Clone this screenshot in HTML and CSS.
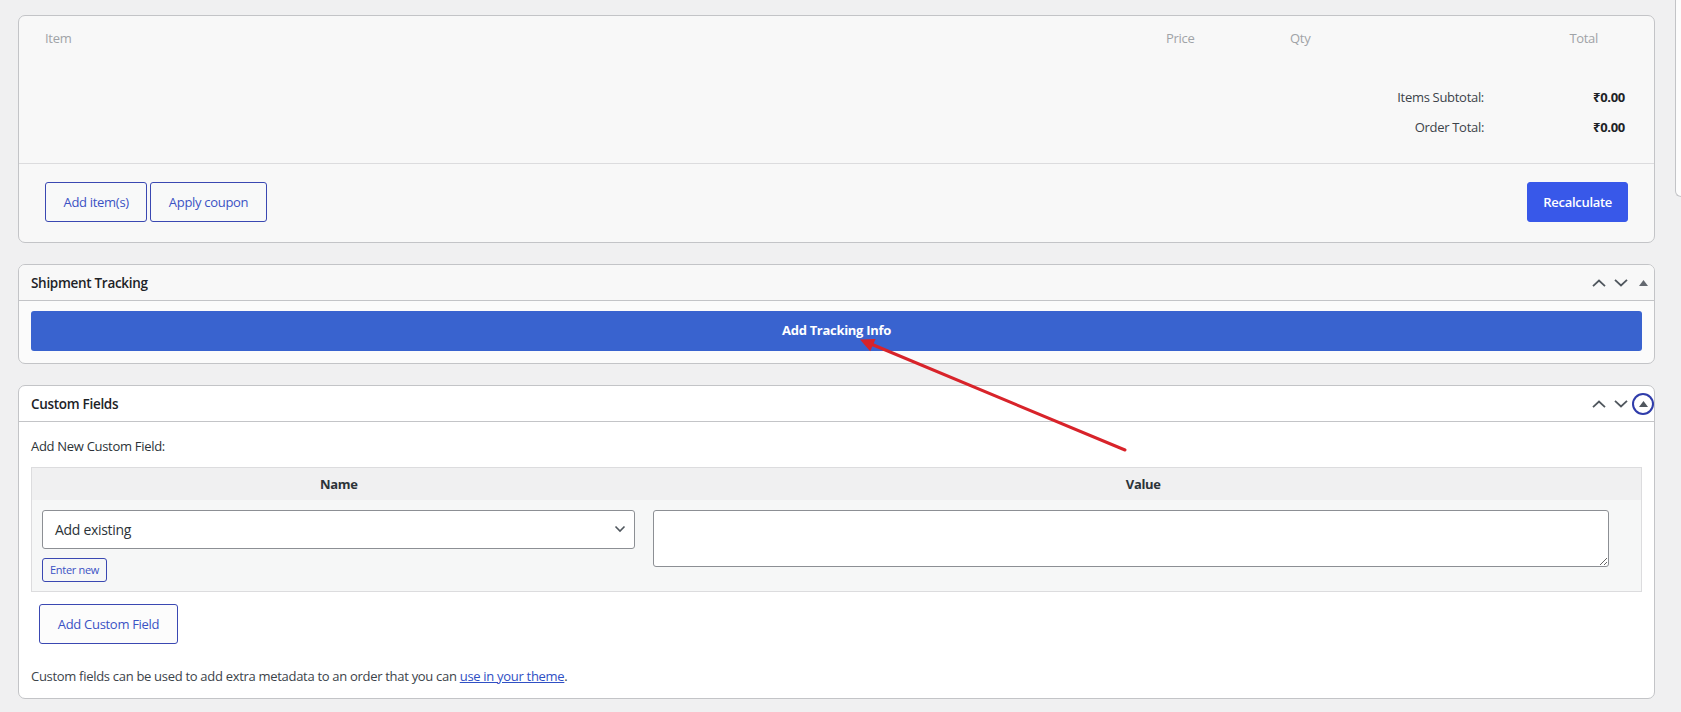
FILE: index.html
```html
<!DOCTYPE html>
<html lang="en">
<head>
<meta charset="utf-8">
<title>Edit order</title>
<link rel="stylesheet" href="styles.css">
</head>
<body>
<div class="page">
  <main class="main">

    <!-- Order items -->
    <section class="panel items-panel">
      <div class="items-body">
        <div class="items-head">
          <span>Item</span>
          <span>Price</span>
          <span>Qty</span>
          <span class="right">Total</span>
        </div>
        <div class="totals">
          <span class="t-label">Items Subtotal:</span>
          <span class="t-value">₹0.00</span>
          <span class="t-label">Order Total:</span>
          <span class="t-value">₹0.00</span>
        </div>
      </div>
      <div class="items-foot">
        <div class="btn-group">
          <button class="btn">Add item(s)</button>
          <button class="btn">Apply coupon</button>
        </div>
        <button class="btn btn-primary">Recalculate</button>
      </div>
    </section>

    <!-- Shipment tracking -->
    <section class="panel postbox tracking">
      <div class="postbox-header">
        <h2>Shipment Tracking</h2>
        <div class="handles">
          <button class="handle" aria-label="Move up"><svg width="14" height="8" viewBox="0 0 14 8"><path d="M1 7.2 7 1.5l6 5.7" fill="none" stroke="#50575e" stroke-width="1.8"/></svg></button>
          <button class="handle" aria-label="Move down"><svg width="14" height="8" viewBox="0 0 14 8"><path d="M1 .8l6 5.7 6-5.7" fill="none" stroke="#50575e" stroke-width="1.8"/></svg></button>
          <button class="handle" aria-label="Toggle panel"><svg width="9" height="6" viewBox="0 0 9 6"><path d="M4.5 0 9 6H0z" fill="#646970"/></svg></button>
        </div>
      </div>
      <div class="postbox-inside">
        <button class="track-btn">Add Tracking Info</button>
      </div>
    </section>

    <!-- Custom fields -->
    <section class="panel postbox custom">
      <div class="postbox-header">
        <h2>Custom Fields</h2>
        <div class="handles">
          <button class="handle" aria-label="Move up"><svg width="14" height="8" viewBox="0 0 14 8"><path d="M1 7.2 7 1.5l6 5.7" fill="none" stroke="#50575e" stroke-width="1.8"/></svg></button>
          <button class="handle" aria-label="Move down"><svg width="14" height="8" viewBox="0 0 14 8"><path d="M1 .8l6 5.7 6-5.7" fill="none" stroke="#50575e" stroke-width="1.8"/></svg></button>
          <button class="handle focused" aria-label="Toggle panel"><svg width="9" height="6" viewBox="0 0 9 6"><path d="M4.5 0 9 6H0z" fill="#50575e"/></svg></button>
        </div>
      </div>
      <div class="postbox-inside custom-inside">
        <p class="cf-title">Add New Custom Field:</p>
        <table class="cf-table">
          <thead>
            <tr><th class="col-name">Name</th><th>Value</th></tr>
          </thead>
          <tbody>
            <tr>
              <td class="col-name">
                <div class="select">
                  <span>Add existing</span>
                  <svg width="12" height="8" viewBox="0 0 12 8"><path d="M1.5 1.5 6 6l4.5-4.5" fill="none" stroke="#50575e" stroke-width="1.6"/></svg>
                </div>
                <button class="btn btn-small">Enter new</button>
              </td>
              <td><textarea class="cf-value" rows="2"></textarea></td>
            </tr>
          </tbody>
        </table>
        <div class="cf-submit">
          <button class="btn btn-add">Add Custom Field</button>
        </div>
        <p class="cf-note">Custom fields can be used to add extra metadata to an order that you can <a href="#">use in your theme</a>.</p>
      </div>
    </section>

  </main>
  <aside class="side"></aside>

  <!-- pointer arrow drawn over the tracking button -->
  <svg class="pointer" width="1681" height="712" viewBox="0 0 1681 712">
    <line x1="1125" y1="450" x2="871" y2="344" stroke="#d8232a" stroke-width="3" stroke-linecap="round"/>
    <polygon points="860,339.5 875.6,339 870.2,351.2" fill="#d8232a"/>
  </svg>
</div>
</body>
</html>
```

FILE: styles.css
```css
* { box-sizing: border-box; }

html, body {
  margin: 0;
  height: 100%;
}

body {
  background: #f0f0f1;
  font-family: "Open Sans", "Noto Sans", sans-serif;
  font-size: 13px;
  letter-spacing: -0.3px;
  color: #3c434a;
  overflow: hidden;
}

.page {
  position: relative;
  display: flex;
  gap: 20px;
  padding-left: 18px;
  min-height: 712px;
}

.main {
  width: 1637px;
  flex: none;
  padding-top: 15px;
  display: flex;
  flex-direction: column;
  gap: 21px;
}

.side {
  flex: 1;
  height: 197px;
  background: #fcfcfc;
  border: 1px solid #c3c4c7;
  border-top: none;
  border-right: none;
  border-bottom-left-radius: 8px;
}

.panel {
  border: 1px solid #c3c4c7;
  border-radius: 7px;
  background: #fff;
  overflow: hidden;
}

/* ---------- buttons ---------- */
button {
  font-family: inherit;
  letter-spacing: inherit;
  cursor: pointer;
}

.btn {
  height: 40px;
  padding: 0 17.5px;
  border: 1px solid #3a48b2;
  border-radius: 3px;
  background: #f8f9f9;
  color: #3b52c4;
  font-size: 13px;
}

.btn-primary {
  background: #3858e9;
  border-color: #3858e9;
  color: #fff;
  font-weight: 600;
  padding: 0 15px;
}

.btn-small {
  height: 24px;
  padding: 0 7px;
  font-size: 11px;
  background: #f6f7f7;
}

/* ---------- order items ---------- */
.items-panel { background: #f8f8f8; }

.items-body {
  padding: 12px 56px 21px 26px;
}

.items-head {
  display: grid;
  grid-template-columns: 1fr 124px 140px 168px;
  line-height: 20px;
  color: #a0a3a7;
}

.items-head .right { text-align: right; }

.totals {
  margin-top: 34px;
  margin-right: -27px;
  display: grid;
  grid-template-columns: 1fr 141px;
  line-height: 30px;
}

.t-label {
  text-align: right;
  color: #3c434a;
}

.t-value {
  text-align: right;
  font-weight: 700;
  color: #1d2327;
}

.items-foot {
  border-top: 1px solid #dcdcde;
  padding: 18px 26px 20px 26px;
  display: flex;
  justify-content: space-between;
}

.btn-group {
  display: flex;
  gap: 3px;
}

/* ---------- postboxes ---------- */
.postbox-header {
  height: 36px;
  border-bottom: 1px solid #c3c4c7;
  display: flex;
  align-items: center;
  justify-content: space-between;
  padding-left: 12px;
}

.postbox-header h2 {
  margin: 0;
  font-size: 13.5px;
  font-weight: 600;
  color: #1d2327;
}

.tracking .postbox-header { background: #f8f8f8; }
.tracking { background: #fbfbfb; }

.handles {
  display: flex;
  align-items: center;
  height: 100%;
}

.handle {
  width: 22px;
  height: 22px;
  padding: 0;
  border: none;
  background: transparent;
  display: flex;
  align-items: center;
  justify-content: center;
}

.handle.focused {
  border-radius: 50%;
  box-shadow: inset 0 0 0 2px #2f3caa;
}

.postbox-inside {
  padding: 10px 12px 12px 12px;
}

.track-btn {
  display: block;
  width: 100%;
  height: 40px;
  padding-bottom: 3px;
  border: none;
  border-radius: 3px;
  background: #3963cf;
  color: #fff;
  font-size: 13px;
  font-weight: 700;
}

/* ---------- custom fields ---------- */
.custom-inside {
  padding: 14px 12px 12px 12px;
}

.cf-title {
  margin: 0 0 11px;
  line-height: 20px;
  color: #2c3338;
}

.cf-table {
  width: 100%;
  border-collapse: collapse;
  border: 1px solid #dcdcde;
  background: #f6f7f7;
}

.cf-table th {
  height: 32px;
  background: #f0f0f1;
  color: #2c3338;
  font-weight: 700;
  text-align: center;
  padding: 0;
}

.cf-table .col-name { width: 614px; }

.cf-table td {
  vertical-align: top;
  padding: 10px 11px 9px 10px;
}

.select {
  height: 39px;
  border: 1px solid #8c8f94;
  border-radius: 3px;
  background: #fff;
  display: flex;
  align-items: center;
  justify-content: space-between;
  padding: 0 8px 0 12px;
  font-size: 14px;
  color: #2c3338;
  margin-bottom: 9px;
}

.cf-value {
  display: block;
  width: 956px;
  height: 57px;
  margin-left: -3px;
  border: 1px solid #8c8f94;
  border-radius: 3px;
  background: #fff;
  font-family: inherit;
}

.cf-submit {
  padding: 12px 8px 0;
}

.btn-add {
  width: 139px;
  padding: 0;
  height: 40px;
  background: #fcfcfc;
}

.cf-note {
  margin: 22px 0 0;
  line-height: 20px;
  color: #3c434a;
}

.cf-note a {
  color: #2f4fc4;
  text-decoration: underline;
}

/* ---------- pointer ---------- */
.pointer {
  position: absolute;
  top: 0;
  left: 0;
  pointer-events: none;
}
```
